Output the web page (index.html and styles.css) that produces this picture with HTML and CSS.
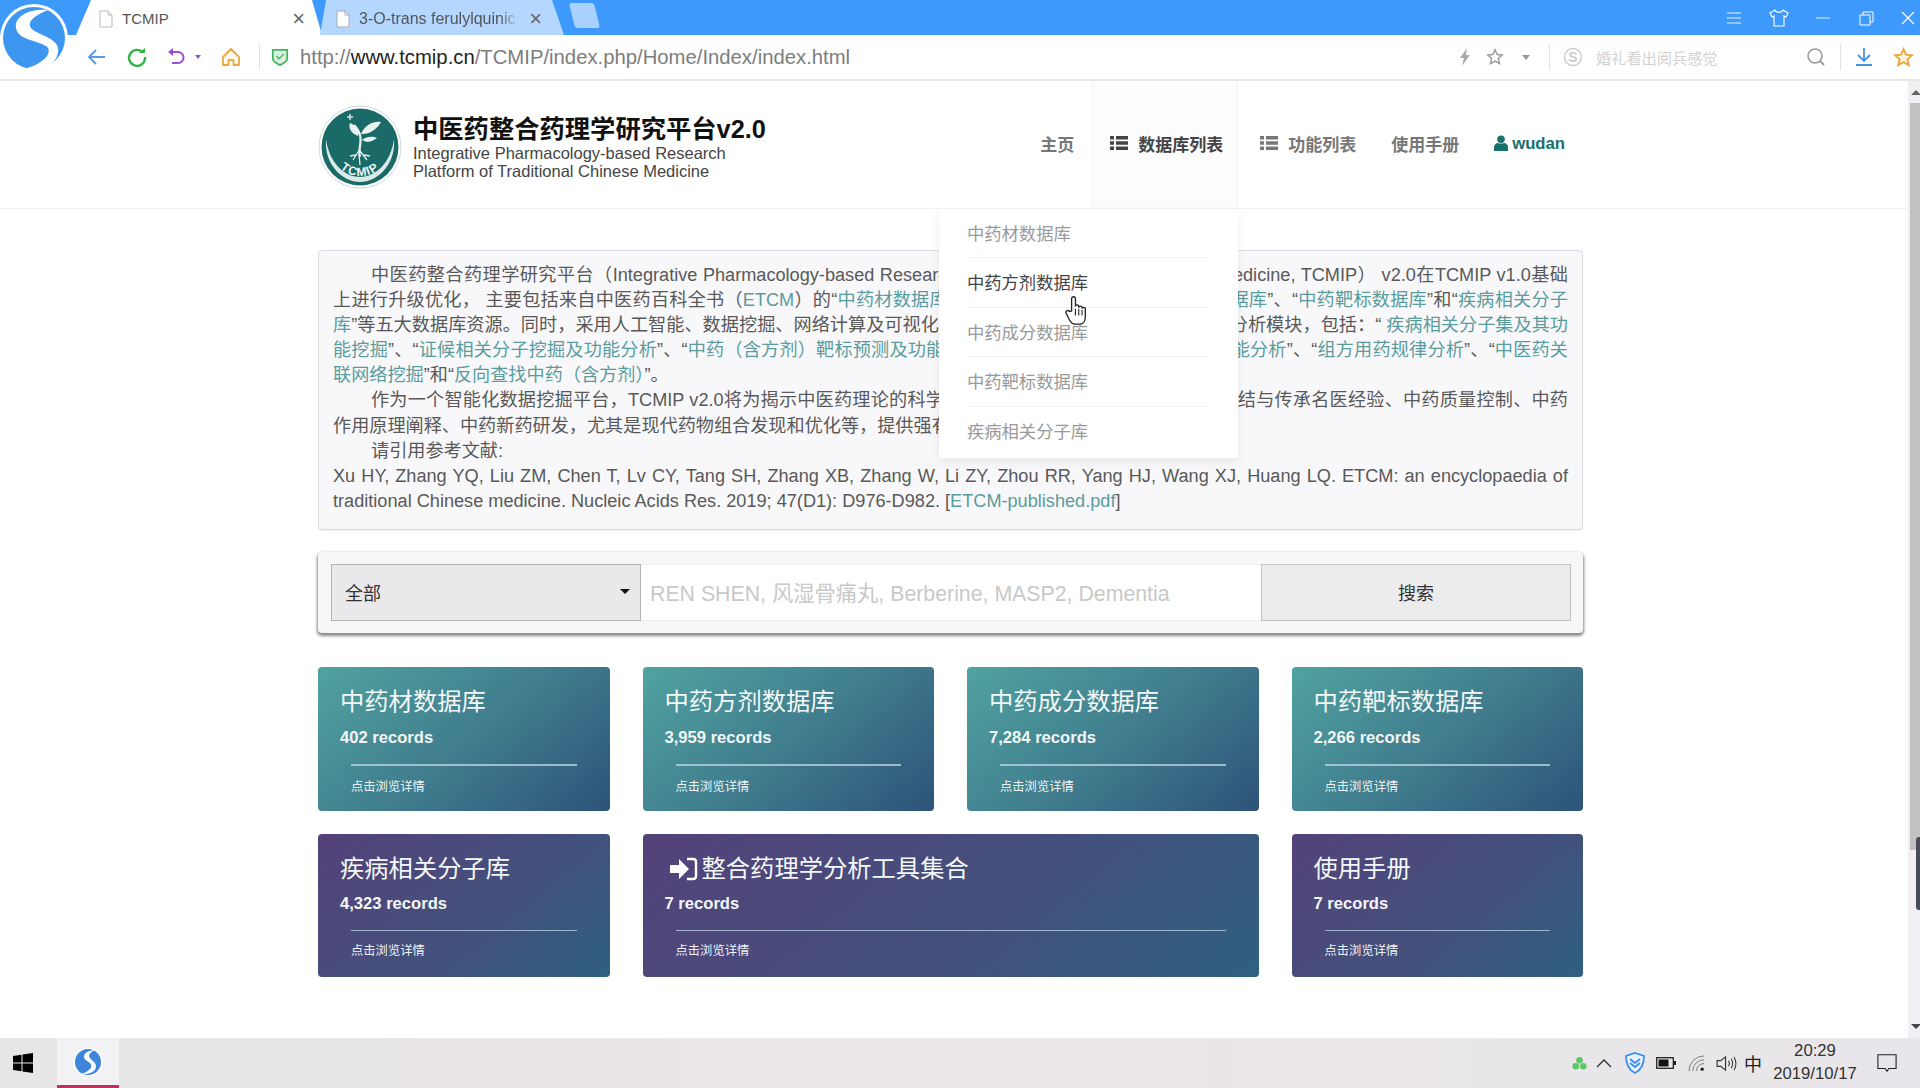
FILE: index.html
```html
<!DOCTYPE html>
<html lang="zh-CN">
<head>
<meta charset="utf-8">
<title>TCMIP</title>
<link rel="stylesheet" href="styles.css">
</head>
<body>
<div class="screen">
  <svg class="browser-logo" viewBox="0 0 68 68"><circle cx="34" cy="34" r="34" fill="#fff"/><circle cx="34" cy="34" r="31" fill="#3d97f0"/><path d="M48 6C30 4 14 12 16 24 18 36 36 36 46 42 54 48 44 60 24 65 44 70 60 58 58 44 56 32 32 30 30 22 28 16 38 10 48 6Z" fill="#fff"/></svg>
  <header class="tabbar">
    <div class="tab tab-active">
      <svg class="file-icon" viewBox="0 0 14 18"><path d="M1 1h8l4 4v12H1z" fill="#fff" stroke="#bbb"/><path d="M9 1v4h4" fill="none" stroke="#bbb"/></svg>
      <span class="tab-label">TCMIP</span><span class="tab-close">×</span>
    </div>
    <div class="tab tab-second">
      <svg class="file-icon" viewBox="0 0 14 18"><path d="M1 1h8l4 4v12H1z" fill="#fff" stroke="#aab"/><path d="M9 1v4h4" fill="none" stroke="#aab"/></svg>
      <span class="tab-label tab-fade">3-O-trans ferulylquinic</span><span class="tab-close">×</span>
    </div>
    <div class="tab-new"></div>
    <div class="win-controls">
      <svg viewBox="0 0 16 16"><path d="M1 3h14M1 8h14M1 13h14" stroke="#e6f1ff" fill="none"/></svg>
      <svg viewBox="0 0 20 18"><path d="M6 1 1 4l2 4 2-1v10h10V7l2 1 2-4-5-3c-1 3-7 3-8 0z" stroke="#fff" fill="none" stroke-width="1.1"/></svg>
      <svg viewBox="0 0 16 16"><path d="M1 8h14" stroke="#e6f1ff" fill="none"/></svg>
      <svg viewBox="0 0 16 16"><path d="M2 5h10v10H2zM5 5V2h10v10h-3" stroke="#fff" fill="none"/></svg>
      <svg viewBox="0 0 16 16"><path d="M2 2l12 12M14 2 2 14" stroke="#fff" fill="none" stroke-width="1.2"/></svg>
    </div>
  </header>
  <div class="toolbar">
    <svg class="tool tool-back" viewBox="0 0 20 20"><path d="M18 10H3M9 3l-7 7 7 7" fill="none" stroke="#5a9be6" stroke-width="2"/></svg>
    <svg class="tool tool-reload" viewBox="0 0 20 20"><path d="M16 5.500A8 8 0 1 0 18 10" fill="none" stroke="#2fb344" stroke-width="2.400"/><path d="M12 6h6V1z" fill="#2fb344"/></svg>
    <svg class="tool tool-undo" viewBox="0 0 20 20"><path d="M6 5h6a5.500 5.500 0 0 1 0 11H6" fill="none" stroke="#9a4fd0" stroke-width="2"/><path d="M7 1 2 5l5 4z" fill="#9a4fd0"/></svg>
    <span class="tri tri-purple"></span>
    <svg class="tool tool-home" viewBox="0 0 20 20"><path d="M10 2 18 10V18H12.500V13H7.500V18H2V10Z" fill="#fffaf0" stroke="#f0a63c" stroke-width="1.800" stroke-linejoin="round"/></svg>
    <span class="divider divider-url"></span>
    <svg class="tool tool-shield" viewBox="0 0 20 20"><path d="M2 2h16v10c0 3-4 5-8 7-4-2-8-4-8-7z" fill="#d8f0dc" stroke="#45b564" stroke-width="2"/><path d="m6 9 3 3 5-5" fill="none" stroke="#45b564" stroke-width="1.500"/></svg>
    <div class="url">http://<b>www.tcmip.cn</b>/TCMIP/index.php/Home/Index/index.html</div>
    <svg class="tool tool-bolt" viewBox="0 0 14 20"><path d="M9 1 2 11h4l-2 8 8-11H8z" fill="#aaa"/></svg>
    <svg class="tool tool-star" viewBox="0 0 20 20"><path d="m10 2 2.400 5.300 5.600.6-4.200 3.800 1.200 5.600L10 14.500 5 17.300l1.200-5.600L2 7.900l5.600-.6z" fill="none" stroke="#999" stroke-width="1.600"/></svg>
    <span class="tri tri-grey"></span>
    <span class="divider divider-search"></span>
    <svg class="tool tool-sogou" viewBox="0 0 20 20"><circle cx="10" cy="10" r="8.500" fill="none" stroke="#ccc" stroke-width="1.500"/><text x="10" y="15" text-anchor="middle" class="sogou-s">S</text></svg>
    <div class="hot-search">婚礼看出阅兵感觉</div>
    <svg class="tool tool-mag" viewBox="0 0 20 20"><circle cx="9" cy="9" r="7" fill="none" stroke="#999" stroke-width="1.600"/><path d="m14 14 4 4" stroke="#999" stroke-width="1.800"/></svg>
    <span class="divider divider-dl"></span>
    <svg class="tool tool-dl" viewBox="0 0 20 20"><path d="M10 1v12M4 8l6 6 6-6M2 18h16" fill="none" stroke="#4a94de" stroke-width="1.800"/></svg>
    <svg class="tool tool-fav" viewBox="0 0 20 20"><path d="m10 2 2.400 5.300 5.600.6-4.200 3.800 1.200 5.600L10 14.500 5 17.300l1.200-5.600L2 7.900l5.600-.6z" fill="#fff3d8" stroke="#f0a63c" stroke-width="1.800"/></svg>
  </div>

  <div class="viewport">
    <main class="page">
      <div class="site-head">
        <div class="brand">
          <svg class="site-logo" viewBox="0 0 84 84">
            <defs><path id="arc" d="M13 42a29 29 0 0 0 58 0"/></defs>
            <circle cx="42" cy="42" r="41" fill="#fff" stroke="#cfd8d8"/>
            <circle cx="42" cy="42" r="38.500" fill="#1a6b68"/>
            <path d="M8 34C6 60 25 77 42 77S78 60 76 34C73 57 58 72 42 72S11 57 8 34z" fill="#dbe9e7"/>
            <path d="M42 52C40 44 44 38 42 30 41 26 38 22 36 20" fill="none" stroke="#e8f2f0" stroke-width="2.200"/>
            <path d="M43 29C47 20 55 16 63 17 59 24 51 30 43 29zM40 31C33 28 30 23 32 18 37 20 42 24 40 31zM44 35C49 31 55 31 59 33 54 37 49 38 44 35z" fill="#e8f2f0"/>
            <path d="M42 44 35 55M42 46 49 55M41 49 42 60M38 50 32 51M46 50 52 51" fill="none" stroke="#e8f2f0" stroke-width="1.300"/>
            <path d="M29 12h6M32 9v6" stroke="#d2e4e2" stroke-width="1.500"/>
            <text class="logo-ring"><textPath href="#arc" startOffset="50%" text-anchor="middle">TCMIP</textPath></text>
          </svg>
          <div class="brand-text">
            <div class="brand-title">中医药整合药理学研究平台v2.0</div>
            <div class="brand-sub">Integrative Pharmacology-based Research</div>
            <div class="brand-sub">Platform of Traditional Chinese Medicine</div>
          </div>
        </div>
        <nav class="nav">
          <a class="nav-item nav-home">主页</a>
          <a class="nav-item nav-active">
            <svg class="list-icon" viewBox="0 0 18 14"><path d="M0 0h4v3.500H0zM6 0h12v3.500H6zM0 5.200h4v3.500H0zM6 5.200h12v3.500H6zM0 10.500h4V14H0zM6 10.500h12V14H6z" fill="currentColor"/></svg>数据库列表
          </a>
          <a class="nav-item nav-func">
            <svg class="list-icon" viewBox="0 0 18 14"><path d="M0 0h4v3.500H0zM6 0h12v3.500H6zM0 5.200h4v3.500H0zM6 5.200h12v3.500H6zM0 10.500h4V14H0zM6 10.500h12V14H6z" fill="currentColor"/></svg>功能列表
          </a>
          <a class="nav-item nav-manual">使用手册</a>
          <a class="nav-item nav-user">
            <svg class="user-icon" viewBox="0 0 14 16"><circle cx="7" cy="4.200" r="3.800" fill="currentColor"/><path d="M0 16v-3.500C0 9.500 2 8 4 8c1 .8 5 .8 6 0 2 0 4 1.500 4 4.500V16z" fill="currentColor"/></svg><span class="user-name">wudan</span>
          </a>
        </nav>
      </div>

      <section class="intro">
        <span class="ln ind">中医药整合药理学研究平台（Integrative Pharmacology-based Research Platform of Traditional Chinese Medicine, TCMIP） v2.0在TCMIP v1.0基础</span>
        <span class="ln">上进行升级优化， 主要包括来自中医药百科全书（<a>ETCM</a>）的“<a>中药材数据库</a>”、“<a>中药方剂数据库</a>”、“<a>中药成分数据库</a>”、“<a>中药靶标数据库</a>”和“<a>疾病相关分子</a></span>
        <span class="ln"><a>库</a>”等五大数据库资源。同时，采用人工智能、数据挖掘、网络计算及可视化等技术，构建了多个智能化数据挖掘分析模块，包括：“ <a>疾病相关分子集及其功</a></span>
        <span class="ln"><a>能挖掘</a>”、“<a>证候相关分子挖掘及功能分析</a>”、“<a>中药（含方剂）靶标预测及功能分析</a>”、“<a>中药活性成分靶标预测及功能分析</a>”、“<a>组方用药规律分析</a>”、“<a>中医药关</a></span>
        <span class="ln ln-end"><a>联网络挖掘</a>”和“<a>反向查找中药（含方剂）</a>”。</span>
        <span class="ln ind">作为一个智能化数据挖掘平台，TCMIP v2.0将为揭示中医药理论的科学内涵、中药药性与配伍规律研究、总结与传承名医经验、中药质量控制、中药</span>
        <span class="ln ln-end">作用原理阐释、中药新药研发，尤其是现代药物组合发现和优化等，提供强有力的支撑。</span>
        <span class="ln ln-end ind">请引用参考文献:</span>
        <span class="ln">Xu HY, Zhang YQ, Liu ZM, Chen T, Lv CY, Tang SH, Zhang XB, Zhang W, Li ZY, Zhou RR, Yang HJ, Wang XJ, Huang LQ. ETCM: an encyclopaedia of</span>
        <span class="ln ln-end">traditional Chinese medicine. Nucleic Acids Res. 2019; 47(D1): D976-D982. [<a>ETCM-published.pdf</a>]</span>
      </section>

      <form class="search">
        <div class="search-select">全部<span class="tri tri-black"></span></div>
        <div class="search-input">REN SHEN, 风湿骨痛丸, Berberine, MASP2, Dementia</div>
        <div class="search-btn">搜索</div>
      </form>

      <section class="cards">
        <a class="card teal"><h3>中药材数据库</h3><p class="rec">402 records</p><p class="more">点击浏览详情</p></a>
        <a class="card teal"><h3>中药方剂数据库</h3><p class="rec">3,959 records</p><p class="more">点击浏览详情</p></a>
        <a class="card teal"><h3>中药成分数据库</h3><p class="rec">7,284 records</p><p class="more">点击浏览详情</p></a>
        <a class="card teal"><h3>中药靶标数据库</h3><p class="rec">2,266 records</p><p class="more">点击浏览详情</p></a>
        <a class="card purple"><h3>疾病相关分子库</h3><p class="rec">4,323 records</p><p class="more">点击浏览详情</p></a>
        <a class="card purple wide"><h3 class="with-icon"><svg class="login-icon" viewBox="0 0 28 24"><path d="M0 8h9V2l10 10-10 10v-6H0z" fill="#fff"/><path d="M17 2h6c2 0 3 1 3 3v14c0 2-1 3-3 3h-6" fill="none" stroke="#fff" stroke-width="2.400"/></svg>整合药理学分析工具集合</h3><p class="rec">7 records</p><p class="more">点击浏览详情</p></a>
        <a class="card purple"><h3>使用手册</h3><p class="rec">7 records</p><p class="more">点击浏览详情</p></a>
      </section>
    </main>

    <div class="scrollbar"><span class="sb-up"></span><span class="sb-track"></span><span class="sb-thumb"></span><span class="sb-down"></span></div>

    <ul class="dropdown">
      <li>中药材数据库</li>
      <li class="dd-hover">中药方剂数据库</li>
      <li>中药成分数据库</li>
      <li>中药靶标数据库</li>
      <li>疾病相关分子库</li>
    </ul>
    <svg class="hand" viewBox="0 0 20 28"><path d="M6 14V3c0-2.600 3.500-2.600 3.500 0v7c0-2 3-2 3 0v1c0-2 3-2 3 0v1c0-1.800 3-1.800 3 0v7c0 4-2 7-5 7H9c-3 0-4-2-5-4l-3-6c-1-2 2-3.500 3-1.500z" fill="#fff" stroke="#222" stroke-width="1.200"/><path d="M9.500 12v6M12.500 12v6M15.500 13v5" stroke="#222" fill="none"/></svg>
  </div>

  <footer class="taskbar">
    <svg class="win-logo" viewBox="0 0 20 20"><path d="M0 3l8.500-1.200V9.500H0zM9.500 1.600 20 0v9.500H9.500zM0 10.500h8.500v7.700L0 17zM9.500 10.500H20V20L9.500 18.400z" fill="#000"/></svg>
    <div class="task-app">
      <svg class="task-s" viewBox="0 0 30 30"><circle cx="15" cy="15" r="14.500" fill="#fff"/><circle cx="15" cy="15" r="13" fill="#3d86dc"/><path d="M22 3C11 4 8 10 14 14c6 3 7 8-5 13 12 1 18-7 11-13-5-4-6-7 2-11z" fill="#fff"/></svg>
    </div>
    <div class="tray">
      <svg class="t-green" viewBox="0 0 16 16"><circle cx="8" cy="4.500" r="3.500" fill="#5cc76a"/><circle cx="4" cy="11" r="3.500" fill="#5cc76a"/><circle cx="12" cy="11" r="3.500" fill="#5cc76a"/></svg>
      <svg class="t-caret" viewBox="0 0 16 10"><path d="m1 9 7-7 7 7" fill="none" stroke="#333" stroke-width="1.400"/></svg>
      <svg class="t-shield" viewBox="0 0 20 22"><path d="M10 1 19 4c0 9-3 14-9 17C4 18 1 13 1 4z" fill="#e8f3ff" stroke="#3a8ff0" stroke-width="1.800"/><path d="m5 7 5 4 5-4M5 11l5 4 5-4" fill="none" stroke="#3a8ff0" stroke-width="1.800"/></svg>
      <svg class="t-batt" viewBox="0 0 20 12"><rect x=".7" y=".7" width="16.600" height="10.600" fill="none" stroke="#222" stroke-width="1.300"/><rect x="2.500" y="2.500" width="10" height="7" fill="#111"/><rect x="18" y="4" width="2" height="4" fill="#222"/></svg>
      <svg class="t-wifi" viewBox="0 0 18 18"><path d="M1 17A16 16 0 0 1 17 1M5 17A12 12 0 0 1 17 5M9 17a8 8 0 0 1 8-8" fill="none" stroke="#777" stroke-width="1"/><circle cx="15" cy="15" r="1.800" fill="#222"/></svg>
      <svg class="t-spk" viewBox="0 0 22 18"><path d="M1 6h4l5-4v14l-5-4H1z" fill="none" stroke="#333" stroke-width="1.200"/><path d="M13 6q2 3 0 6M16 4q3 5 0 10M19 2q4 7 0 14" fill="none" stroke="#333" stroke-width="1.100"/></svg>
      <span class="t-ime">中</span>
      <div class="clock"><span>20:29</span><span>2019/10/17</span></div>
      <svg class="t-note" viewBox="0 0 22 20"><path d="M1 1h20v15h-8l-2 3-2-3H1z" fill="none" stroke="#222" stroke-width="1.200"/></svg>
    </div>
  </footer>
</div>
</body>
</html>
```
FILE: styles.css
```css
* { box-sizing: border-box; }
html, body { margin: 0; padding: 0; height: 100%; overflow: hidden; }
body { font-family: "Liberation Sans", "Noto Sans CJK SC", sans-serif; color: #555; background: #fff; }
.screen { position: relative; width: 1920px; height: 1088px; display: flex; flex-direction: column; overflow: hidden; }

/* browser chrome */
.browser-logo { position: absolute; left: 0; top: 4px; width: 68px; height: 68px; z-index: 5; }
.tabbar { height: 35px; background: #3d99fc; display: flex; align-items: flex-end; padding-left: 76px; flex: none; }
.tab { height: 35px; display: flex; align-items: center; position: relative; font-size: 15px; color: #555; padding-top: 2px; }
.tab-active { width: 246px; background: #fff; padding-left: 23px; padding-right: 17px; clip-path: polygon(15px 0, 236px 0, 246px 100%, 0 100%); }
.tab-second { width: 244px; margin-left: -2px; background: #b4d7ff; padding-left: 16px; padding-right: 22px; font-size: 16px; clip-path: polygon(6px 0, 232px 0, 244px 100%, 0 100%); }
.file-icon { width: 14px; height: 18px; flex: none; margin-right: 9px; }
.tab-label { flex: 1; white-space: nowrap; overflow: hidden; }
.tab-fade { -webkit-mask-image: linear-gradient(90deg, #000 88%, transparent); mask-image: linear-gradient(90deg, #000 88%, transparent); }
.tab-close { font-size: 22px; line-height: 1; color: #666; margin-left: 10px; font-weight: 300; }
.tab-new { width: 25px; height: 25px; margin: 0 0 7px 8px; background: #a9d1ff; border-radius: 3px; transform: skewX(14deg); align-self: flex-end; }
.win-controls { margin-left: auto; height: 35px; width: 194px; padding-right: 4px; display: flex; align-items: center; justify-content: space-between; }
.win-controls svg { width: 16px; height: 16px; }
.win-controls svg:nth-child(2) { width: 20px; height: 18px; }

.toolbar { height: 46px; flex: none; position: relative; background: #fff; border-bottom: 2px solid #e6e6e6; display: flex; align-items: center; }
.tool { flex: none; }
.tool-back { width: 20px; height: 20px; margin-left: 87px; }
.tool-reload { width: 20px; height: 20px; margin-left: 20px; }
.tool-undo { width: 20px; height: 20px; margin-left: 19px; }
.tri { display: inline-block; width: 0; height: 0; border-left: 4px solid transparent; border-right: 4px solid transparent; border-top: 5px solid #999; }
.tri-purple { border-top-color: #9a4fd0; border-left-width: 3px; border-right-width: 3px; border-top-width: 4px; margin-left: 9px; }
.tool-home { width: 20px; height: 20px; margin-left: 20px; }
.divider { width: 1px; height: 26px; background: #e2e2e2; flex: none; }
.divider-url { margin-left: 18px; }
.tool-shield { width: 18px; height: 20px; margin-left: 11px; }
.url { font-size: 20.300px; color: #7d7d7d; margin-left: 11px; width: 1000px; white-space: nowrap; }
.url b { font-weight: 400; color: #222; }
.tool-bolt { width: 14px; height: 20px; margin-left: 158px; }
.tool-star { width: 18px; height: 18px; margin-left: 14px; }
.tri-grey { margin-left: 18px; border-top-color: #999; }
.divider-search { margin-left: 19px; }
.tool-sogou { width: 20px; height: 20px; margin-left: 13px; }
.sogou-s { font-family: "Liberation Sans", sans-serif; font-size: 14px; font-weight: 700; fill: #ccc; }
.hot-search { font-size: 15.200px; color: #d2d2d2; margin-left: 13px; width: 210px; white-space: nowrap; }
.tool-mag { width: 20px; height: 20px; }
.divider-dl { margin-left: 14px; }
.tool-dl { width: 20px; height: 20px; margin-left: 13px; }
.tool-fav { width: 21px; height: 21px; margin-left: 19px; }

/* page */
.viewport { flex: 1; min-height: 0; position: relative; overflow: hidden; }
.page { height: 100%; padding-right: 11px; }
.site-head { height: 128px; border-bottom: 1px solid #f2f2f4; padding-left: 318px; padding-right: 344px; display: flex; justify-content: space-between; }
.brand { display: flex; align-items: flex-start; padding-top: 24px; }
.site-logo { width: 84px; height: 84px; flex: none; }
.logo-ring { font-family: "Liberation Sans", sans-serif; font-size: 12px; font-weight: 700; fill: #f0f7f6; letter-spacing: 1.200px; }
.brand-text { margin-left: 11px; padding-top: 9px; }
.brand-title { font-size: 25.300px; font-weight: 700; color: #111; line-height: 30px; white-space: nowrap; }
.brand-sub { font-size: 16.500px; line-height: 18px; color: #444; white-space: nowrap; }
.nav { display: flex; align-items: stretch; font-size: 17px; font-weight: 700; color: #777; }
.nav-item { display: flex; align-items: center; white-space: nowrap; padding-bottom: 3px; }
.nav-home { margin-right: 18px; }
.nav-active { width: 146px; padding-left: 17px; color: #444; background: #fdfdfe; border-left: 1px solid #f5f5f7; border-right: 1px solid #f5f5f7; }
.nav-func { margin-left: 22px; }
.nav-manual { margin-left: 35px; }
.nav-user { margin-left: 35px; color: #17706c; }
.user-name { position: relative; top: 1px; font-size: 16.700px; }
.list-icon { width: 18px; height: 14px; margin-right: 10px; flex: none; }
.user-icon { width: 14px; height: 16px; margin-right: 4px; flex: none; }

.intro { margin: 41px 0 0 318px; width: 1265px; height: 280px; padding: 12px 14px; background: #f8f8fa; border: 1px solid #dcdce0; border-radius: 4px; font-size: 18.150px; line-height: 25.100px; color: #595959; box-shadow: 0 1px 1px rgba(0,0,0,.05); }
.intro a { color: #5a9c9e; }
.ln { display: block; text-align: justify; text-align-last: justify; white-space: nowrap; }
.ln-end { text-align-last: left; }
.ind { padding-left: 38px; }

.search { margin: 22px 0 0 318px; width: 1265px; height: 81px; padding: 12px 12px 12px 13px; background: #f7f7f9; border-radius: 4px; box-shadow: 0 2px 3px 1px #8a8a8a; display: flex; font-size: 18px; }
.search-select { width: 310px; display: flex; align-items: center; justify-content: space-between; padding: 0 10px 2px 13px; background: #e9e9eb; border: 1px solid #b4b4b6; color: #333; }
.tri-black { border-top-color: #111; border-left-width: 5px; border-right-width: 5px; }
.search-input { flex: 1; background: #fff; padding: 0 0 3px 9px; display: flex; align-items: center; font-size: 21.300px; color: #c9c9c9; white-space: nowrap; border-top: 1px solid #f0f0f2; border-bottom: 1px solid #f0f0f2; }
.search-btn { width: 310px; display: flex; align-items: center; justify-content: center; padding-bottom: 2px; background: #ececec; border: 1px solid #c2c2c4; color: #333; }

.cards { margin: 34px 0 0 318px; width: 1265px; display: grid; grid-template-columns: repeat(4, 1fr); gap: 23px 33px; }
.card { height: 143.500px; border-radius: 4px; padding: 17px 22px 0; color: #fff; display: block; }
.teal { background: linear-gradient(140deg, #50a3a0 0%, #3f7a8c 55%, #2d5379 100%); }
.purple { background: linear-gradient(140deg, #54427a 0%, #44507c 55%, #2f6080 100%); }
.wide { grid-column: span 2; }
.card h3 { margin: 0; font-size: 24.300px; font-weight: 400; line-height: 36px; color: #f4f8f8; white-space: nowrap; }
.with-icon { display: flex; align-items: center; padding-left: 5px; }
.login-icon { width: 28px; height: 24px; margin-right: 4px; flex: none; }
.rec { margin: 7px 0 0; font-size: 16.600px; font-weight: 700; line-height: 22px; color: #f2f6f6; }
.more { margin: 15px 11px 0; padding-top: 12px; border-top: 2px solid rgba(190,215,230,.75); font-size: 12.300px; line-height: 18px; color: #eef3f5; }
.purple .rec { margin-top: 6px; }
.purple .more { border-top-width: 1px; padding-top: 11px; }

.scrollbar { position: absolute; right: 0; top: 0; bottom: 0; width: 12px; background: #f1eff3; }
.sb-up, .sb-down { position: absolute; left: 3px; width: 0; height: 0; border-left: 5px solid transparent; border-right: 5px solid transparent; }
.sb-up { top: 9px; border-bottom: 5px solid #666; }
.sb-down { bottom: 9px; border-top: 5px solid #444; }
.sb-track { position: absolute; left: 2px; right: 0; top: 22px; height: 747px; background: #c1c1c1; }
.sb-thumb { position: absolute; left: 8px; right: 0; top: 756px; height: 73px; background: #4a4a5a; border-radius: 3px 0 0 3px; }

.dropdown { position: absolute; left: 939px; top: 128px; width: 299px; height: 249px; margin: 0; padding: 0 30px 0 28px; list-style: none; background: #fff; box-shadow: 0 4px 10px rgba(0,0,0,.07); font-size: 17.300px; color: #9a9a9a; z-index: 3; }
.dropdown li { height: 49.400px; padding-top: 2px; line-height: 46px; border-bottom: 1px solid #efefef; white-space: nowrap; }
.dropdown li:last-child { border-bottom: 0; }
.dd-hover { color: #444; }
.hand { position: absolute; left: 1065px; top: 214px; width: 22px; height: 32px; z-index: 4; }

/* taskbar */
.taskbar { height: 50px; flex: none; background: linear-gradient(90deg, #e6e5e8, #ece6e8 45%, #e8e6ea); display: flex; align-items: stretch; }
.win-logo { width: 20px; height: 20px; margin: 15px 24px 0 13px; flex: none; }
.task-app { width: 62px; background: #f2f2f5; border-bottom: 3px solid #c2305f; display: flex; align-items: center; justify-content: center; }
.task-s { width: 30px; height: 30px; }
.tray { margin-left: auto; display: flex; align-items: center; color: #222; padding-right: 23px; }
.tray svg { flex: none; }
.t-green { width: 15px; height: 15px; margin-right: 9px; }
.t-caret { width: 16px; height: 10px; margin-right: 13px; }
.t-shield { width: 20px; height: 22px; margin-right: 11px; }
.t-batt { width: 20px; height: 12px; margin-right: 12px; }
.t-wifi { width: 17px; height: 17px; margin-right: 11px; }
.t-spk { width: 21px; height: 17px; margin-right: 7px; }
.t-ime { font-size: 18px; margin-right: 10px; }
.clock { width: 86px; display: flex; flex-direction: column; align-items: center; font-size: 16.700px; line-height: 23px; color: #333; margin-right: 19px; padding-bottom: 2px; }
.t-note { width: 20px; height: 20px; }
```
